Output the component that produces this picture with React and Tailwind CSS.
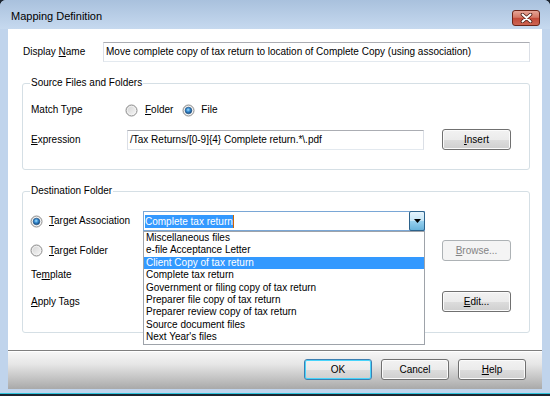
import React from 'react';

const items = [
  'Miscellaneous files',
  'e-file Acceptance Letter',
  'Client Copy of tax return',
  'Complete tax return',
  'Government or filing copy of tax return',
  'Preparer file copy of tax return',
  'Preparer review copy of tax return',
  'Source document files',
  "Next Year's files",
];

const Radio = ({ checked }) => (
  <svg width="13" height="13" viewBox="0 0 13 13" className="shrink-0">
    <defs>
      <linearGradient id="radioBg" x1="0" y1="0" x2="1" y2="1">
        <stop offset="0" stopColor="#cfcfcf" />
        <stop offset="1" stopColor="#fbfbfb" />
      </linearGradient>
      <radialGradient id="radioDot" cx="0.45" cy="0.4" r="0.6">
        <stop offset="0" stopColor="#a8e4ff" />
        <stop offset="0.45" stopColor="#3b8fd4" />
        <stop offset="1" stopColor="#12467a" />
      </radialGradient>
    </defs>
    <circle cx="6.5" cy="6.5" r="5.5" fill="url(#radioBg)" stroke="#8c8c8c" />
    <circle cx="6.5" cy="6.5" r="4.2" fill="none" stroke="#f4f4f4" strokeWidth="0.8" />
    {checked && <circle cx="6.5" cy="6.5" r="3.3" fill="url(#radioDot)" stroke="#1b4f82" strokeWidth="0.6" />}
  </svg>
);

const btnBase =
  'h-[21px] rounded-[3px] border flex items-center justify-center shrink-0 leading-[12px]';
const btnNormal =
  'border-[#707070] text-black bg-[linear-gradient(#f2f2f2_0%,#ebebeb_50%,#dddddd_51%,#cfcfcf_100%)] shadow-[inset_0_0_0_1px_#fbfbfb]';

const Button = ({ children, className }) => (
  <div className={`${btnBase} ${btnNormal} ${className}`}>{children}</div>
);

const Legend = ({ children }) => (
  <span className="-mt-[7px] -ml-[1px] self-start bg-white px-[1px] leading-[12px]">{children}</span>
);

export default function App() {
  return (
    <div className="w-[550px] h-[396px] bg-[#1c2530] overflow-hidden font-['Liberation_Sans',Arial,sans-serif] text-[10px] leading-[12px] text-black">
      <div className="w-[550px] h-[394px] rounded-t-[6px] bg-[#c0d4ec] border-b border-[#2fc3dc] flex flex-col">
        {/* title bar */}
        <div className="h-[29px] shrink-0 flex items-start rounded-t-[6px] bg-[linear-gradient(#a9c1dd,#c6d9ef)]">
          <span className="ml-[11px] mt-[10px] text-[11px] leading-[13px]">Mapping Definition</span>
          <div className="ml-auto mr-[10px] mt-[10px] w-[28px] h-[16px] rounded-[3px] border border-[#6b2418] bg-[linear-gradient(#e6a597_0%,#d47866_45%,#c24a39_52%,#cd6553_100%)] flex items-center justify-center">
            <svg width="13" height="10" viewBox="0 0 13 10">
              <path d="M2.5 1.5 L10.5 8.5 M10.5 1.5 L2.5 8.5" stroke="#4a1a12" strokeWidth="3.6" strokeLinecap="round" />
              <path d="M2.5 1.5 L10.5 8.5 M10.5 1.5 L2.5 8.5" stroke="#ffffff" strokeWidth="2" strokeLinecap="round" />
            </svg>
          </div>
        </div>

        {/* client area */}
        <div className="mx-[8px] h-[360px] shrink-0 bg-white flex flex-col">
          <div className="mt-[13px] h-[20px] flex items-center">
            <span className="ml-[15px] w-[80px]">
              Display <span className="underline">N</span>ame
            </span>
            <div className="w-[427px] h-[20px] border border-[#abadb3] border-x-[#dbdfe6] border-b-[#e3e9ef] pl-[2px] flex items-center">
              Move complete copy of tax return to location of Complete Copy (using association)
            </div>
          </div>

          {/* Source Files and Folders */}
          <div className="mt-[21px] ml-[14px] w-[508px] h-[87px] shrink-0 border border-[#d5dfe5] rounded-[3px] pl-[8px] flex flex-col">
            <Legend>Source Files and Folders</Legend>
            <div className="mt-[11px] h-[20px] flex items-center">
              <span className="w-[94px]">Match Type</span>
              <Radio />
              <span className="ml-[7px]">
                <span className="underline">F</span>older
              </span>
              <span className="ml-[9px]" />
              <Radio checked />
              <span className="ml-[6px]">File</span>
            </div>
            <div className="mt-[9px] h-[21px] flex items-center">
              <span className="w-[96px]">
                <span className="underline">E</span>xpression
              </span>
              <div className="w-[297px] h-[20px] border border-[#abadb3] border-x-[#dbdfe6] border-b-[#e3e9ef] pl-[2px] flex items-center">
                /Tax Returns/[0-9]{'{4}'} Complete return.*\.pdf
              </div>
              <Button className="ml-[18px] w-[69px]">
                <span>
                  <span className="underline">I</span>nsert
                </span>
              </Button>
            </div>
          </div>

          {/* Destination Folder */}
          <div className="mt-[21px] ml-[14px] w-[508px] h-[142px] shrink-0 border border-[#d5dfe5] rounded-[3px] pl-[8px] flex flex-col">
            <Legend>Destination Folder</Legend>
            <div className="mt-[14px] h-[20px] flex items-center">
              <div className="w-[112px] flex items-center">
                <span className="-ml-[1px]" />
                <Radio checked />
                <span className="ml-[6px]">
                  <span className="underline">T</span>arget Association
                </span>
              </div>
              <div className="relative w-[282px] h-[20px] border border-[#7aa7d6] flex items-center pl-[1px]">
                <span className="bg-[#3399ff] text-white h-[13px] leading-[13px]">Complete tax return</span>
                <span className="w-[1px] h-[13px] bg-[#cc6600]" />
                <div className="ml-auto h-[20px] w-[16px] -mr-[1px] border border-[#2c628b] rounded-[2px] bg-[linear-gradient(#e5f4fc_0%,#c4e5f6_50%,#98d1ef_51%,#68b3db_100%)] flex items-center justify-center">
                  <svg width="7" height="4" viewBox="0 0 7 4">
                    <path d="M0 0 H7 L3.5 4 Z" fill="#000" />
                  </svg>
                </div>
                <div className="absolute z-10 left-[-1px] top-[19px] w-[282px] border border-[#9ea3aa] bg-white">
                  {items.map((t, i) => (
                    <div
                      key={t}
                      className={`h-[12.4px] leading-[12.4px] pl-[2px] whitespace-nowrap ${
                        i === 2 ? 'bg-[#3399ff] text-white' : ''
                      }`}
                    >
                      {t}
                    </div>
                  ))}
                </div>
              </div>
            </div>
            <div className="mt-[9px] h-[21px] flex items-center">
              <div className="w-[112px] flex items-center">
                <span className="-ml-[1px]" />
                <Radio />
                <span className="ml-[6px]">
                  <span className="underline">T</span>arget Folder
                </span>
              </div>
              <div className="w-[282px]" />
              <div className={`${btnBase} ml-[17px] w-[69px] border-[#adb2b5] bg-[#f4f4f4] text-[#838383]`}>
                <span>
                  <span className="underline">B</span>rowse...
                </span>
              </div>
            </div>
            <div className="mt-[4px] h-[20px] flex items-center">
              <span>
                Te<span className="underline">m</span>plate
              </span>
            </div>
            <div className="mt-[6px] h-[21px] flex items-center">
              <span className="w-[112px]">
                <span className="underline">A</span>pply Tags
              </span>
              <div className="w-[282px]" />
              <Button className="ml-[17px] w-[69px]">
                <span>
                  <span className="underline">E</span>dit...
                </span>
              </Button>
            </div>
          </div>

          {/* button bar */}
          <div className="mt-auto h-[39px] shrink-0 border-t border-[#7f7f7f] shadow-[inset_0_1px_0_#ffffff] bg-[linear-gradient(#f7f7f7,#e6e6e6_35%,#a9a9a9)] flex items-start justify-end gap-[9px] pt-[8px] pr-[16px]">
            <div className={`${btnBase} w-[68px] border-[#3c7fb1] bg-[linear-gradient(#f2f2f2_0%,#ebebeb_50%,#dddddd_51%,#cfcfcf_100%)] shadow-[inset_0_0_0_1px_#48d4fb]`}>
              OK
            </div>
            <Button className="w-[68px]">Cancel</Button>
            <Button className="w-[68px]">
              <span>
                <span className="underline">H</span>elp
              </span>
            </Button>
          </div>
        </div>
      </div>
    </div>
  );
}
